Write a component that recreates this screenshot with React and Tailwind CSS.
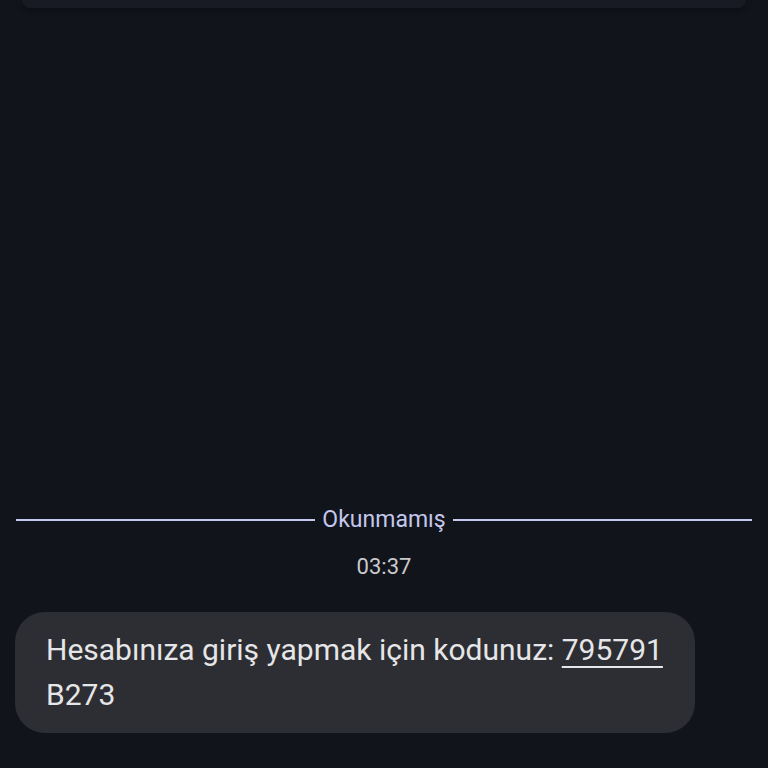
import React from 'react';

export default function App() {
  return (
    <div
      className="relative flex h-[768px] w-[768px] flex-col overflow-hidden bg-[#11141b]"
      style={{ fontFamily: 'Roboto, "Noto Sans", sans-serif' }}
    >
      {/* previous card peeking from the top */}
      <div className="mx-[22px] h-[8px] rounded-b-[14px] bg-[#181b23] shadow-[0_2px_6px_rgba(0,0,0,0.35)]" />

      <div className="flex-1" />

      {/* unread divider */}
      <div className="flex items-center gap-[7px] px-[16px]">
        <div className="h-[2px] flex-1 bg-[#c3c8ec]" />
        <span className="text-[23px] leading-none text-[#c3c8ec]">Okunmamış</span>
        <div className="h-[2px] flex-1 bg-[#c3c8ec]" />
      </div>

      <div className="mt-[25px] text-center text-[22px] leading-none text-[#cacacd]">03:37</div>

      {/* message bubble */}
      <div className="mb-[35px] ml-[15px] mt-[34px] w-[680px] rounded-[30px] bg-[#2d2e33] px-[31px] pb-[16px] pt-[15px]">
        <p className="text-[30px] leading-[45px] text-[#e6e6e8]">
          Hesabınıza giriş yapmak için kodunuz:{' '}
          <span className="underline decoration-[2px] underline-offset-[6px]">795791</span>
          <br />
          B273
        </p>
      </div>
    </div>
  );
}
